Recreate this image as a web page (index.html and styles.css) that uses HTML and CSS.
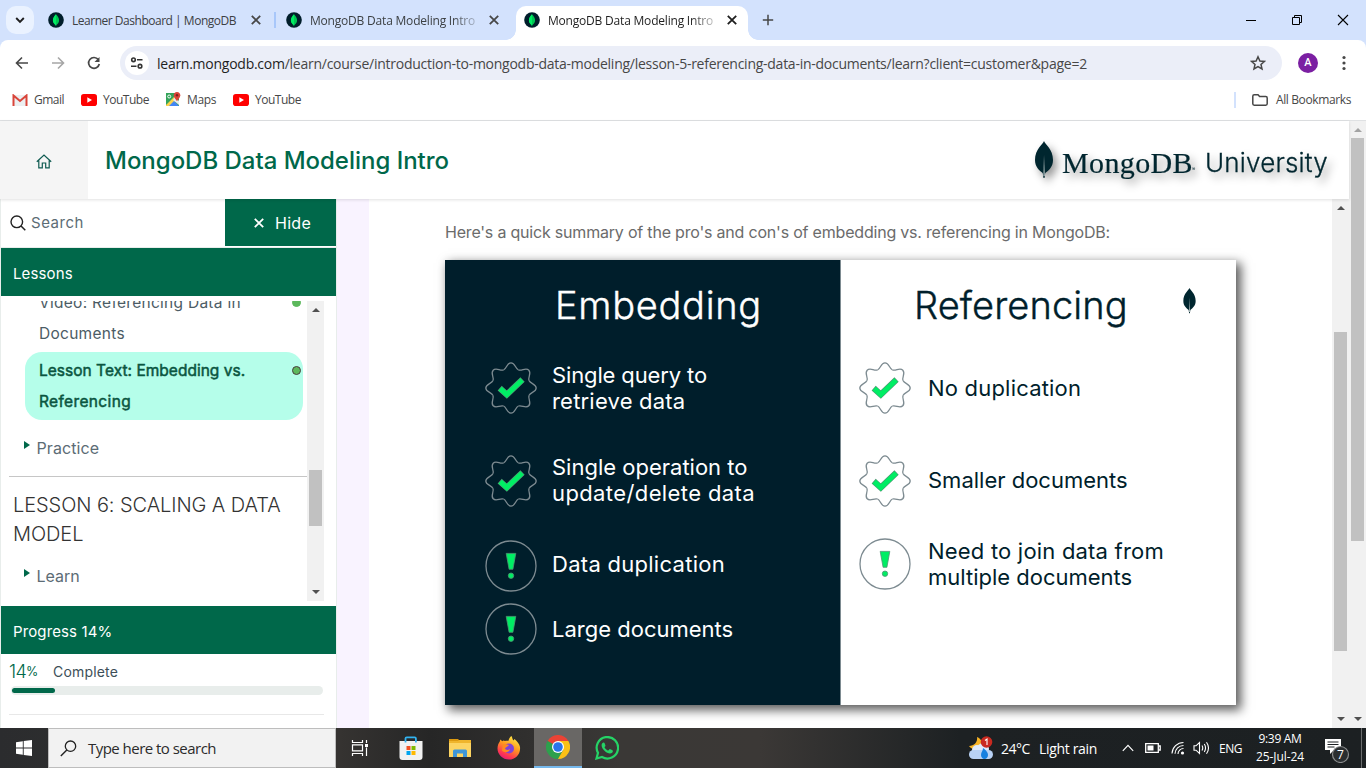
FILE: index.html
```html
<!DOCTYPE html>
<html lang="en">
<head>
<meta charset="utf-8">
<title>MongoDB Data Modeling Intro</title>
<link rel="stylesheet" href="styles.css">
</head>
<body>
<svg class="defs" width="0" height="0">
  <defs>
    <symbol id="leafdot" viewBox="0 0 16 16"><circle cx="8" cy="8" r="7.8" fill="#001e2b"/><path d="M8 2.200C6.200 4.100 4.900 6 4.900 8.300c0 2.100 1.200 3.600 2.600 4.600l.5 1.200.5-1.200c1.400-1 2.600-2.500 2.600-4.600C11.100 6 9.800 4.100 8 2.200z" fill="#00c853"/><path d="M8 2.200v11.900l-.5-1.200C6.100 11.900 4.900 10.400 4.900 8.300 4.900 6 6.200 4.100 8 2.200z" fill="#00ed64"/></symbol>
    <symbol id="x" viewBox="0 0 10 10"><path d="M1.500 1.500l7 7M8.500 1.500l-7 7" stroke="currentColor" stroke-width="1.5" fill="none"/></symbol>
    <symbol id="yt" viewBox="0 0 16 12"><rect width="16" height="12" rx="2.8" fill="#f00"/><path d="M6.300 3.300v5.400L11 6z" fill="#fff"/></symbol>
    <symbol id="leaf" viewBox="0 0 18 38"><path d="M9 0C8.200 3 0 8 0 19c0 7 4.500 10.500 7.700 13L8.500 37h1l.8-5C13.500 29.500 18 26 18 19 18 8 9.800 3 9 0z" fill="#00262f"/><path d="M9 14l-.6 21h1.400z" fill="#b5c3c3"/></symbol>
    <path id="lobe" d="M-7.460-18.020C-4.200-19.400-4.200-25.200 0-25.200S4.200-19.400 7.460-18.020"/>
    <symbol id="check" viewBox="-26 -26 52 52">
      <g fill="none" stroke="#7d8b91" stroke-width="1.300"><use href="#lobe"/><use href="#lobe" transform="rotate(45)"/><use href="#lobe" transform="rotate(90)"/><use href="#lobe" transform="rotate(135)"/><use href="#lobe" transform="rotate(180)"/><use href="#lobe" transform="rotate(225)"/><use href="#lobe" transform="rotate(270)"/><use href="#lobe" transform="rotate(315)"/></g>
      <path d="M-9 2.200L-4.200 6.500 9.300-6.300" fill="none" stroke="#4f9673" stroke-width="6.200" stroke-linecap="square"/>
      <path d="M-9 2.200L-4.200 6.500 9.300-6.300" fill="none" stroke="#00ed64" stroke-width="5" stroke-linecap="square"/>
    </symbol>
    <symbol id="warn" viewBox="-26 -26 52 52">
      <circle r="25" fill="none" stroke="#7d8b91" stroke-width="1.300"/>
      <g fill="#00ed64" stroke="#4f9673" stroke-width=".8"><path d="M-4.800-12.600H4.800L1.900 3.300H-1.900z"/><circle cy="9.700" r="2.700"/></g>
    </symbol>
  </defs>
</svg>

<div class="tabstrip">
  <div class="tab-search"><svg width="10" height="8" viewBox="0 0 10 8"><path d="M1.200 2l3.800 3.800L8.800 2" fill="none" stroke="#1f1f1f" stroke-width="1.900"/></svg></div>
  <div class="tab tab-first"><svg class="fav"><use href="#leafdot"/></svg><span class="tab-title">Learner Dashboard | MongoDB</span><svg class="tab-x"><use href="#x"/></svg></div>
  <div class="tab-sep"></div>
  <div class="tab tab-second"><svg class="fav"><use href="#leafdot"/></svg><span class="tab-title fade">MongoDB Data Modeling Intro</span><svg class="tab-x"><use href="#x"/></svg></div>
  <div class="tab tab-active"><svg class="fav"><use href="#leafdot"/></svg><span class="tab-title fade">MongoDB Data Modeling Intro</span><svg class="tab-x"><use href="#x"/></svg></div>
  <svg class="new-tab" width="12" height="12" viewBox="0 0 12 12"><path d="M6 .8v10.400M.8 6h10.400" stroke="#474747" stroke-width="1.500"/></svg>
  <div class="win-controls">
    <svg width="46" height="40"><path d="M18 20.500h10" stroke="#000"/></svg>
    <svg width="46" height="40"><path d="M18.500 17.500h7v7h-7zM20.500 17.500v-2h7v7h-2" fill="none" stroke="#000"/></svg>
    <svg width="46" height="40"><path d="M18 15l10 10M28 15L18 25" stroke="#000" stroke-width="1.100"/></svg>
  </div>
</div>

<div class="toolbar">
  <div class="nav">
    <svg width="36" height="24" viewBox="0 0 36 24"><path d="M24 12H13M18 6.500L12.500 12l5.500 5.500" fill="none" stroke="#474747" stroke-width="1.600"/></svg>
    <svg width="36" height="24" viewBox="0 0 36 24"><path d="M12 12h11M18 6.500l5.500 5.500-5.500 5.500" fill="none" stroke="#a6a6a6" stroke-width="1.600"/></svg>
    <svg width="36" height="24" viewBox="0 0 36 24"><path d="M22.300 8.600A5.400 5.400 0 1 0 23.300 13" fill="none" stroke="#474747" stroke-width="1.700"/><path d="M23.500 6v5h-5z" fill="#474747"/></svg>
  </div>
  <div class="omnibox">
    <div class="site-info"><svg width="14" height="12" viewBox="0 0 14 12"><g fill="none" stroke="#333" stroke-width="1.600"><circle cx="3.500" cy="2.800" r="1.800"/><path d="M7 2.800h5.500M1 9.200h5.500"/><circle cx="10" cy="9.200" r="1.800"/></g></svg></div>
    <span class="url"><b class="host">learn.mongodb.com</b>/learn/course/introduction-to-mongodb-data-modeling/lesson-5-referencing-data-in-documents/learn?client=customer&amp;page=2</span>
    <svg class="star" width="16" height="16" viewBox="0 0 16 16"><path d="M8 1.800l1.900 4.200 4.500.4-3.400 3 1 4.500L8 11.500l-4 2.400 1-4.500-3.400-3 4.500-.4z" fill="none" stroke="#474747" stroke-width="1.500"/></svg>
  </div>
  <div class="avatar">A</div>
  <svg class="kebab" width="4" height="16" viewBox="0 0 4 16"><g fill="#474747"><circle cx="2" cy="2.500" r="1.600"/><circle cx="2" cy="8" r="1.600"/><circle cx="2" cy="13.500" r="1.600"/></g></svg>
</div>

<div class="bookmarks">
  <div class="bm bm-gmail"><svg width="16" height="12" viewBox="0 0 16 12"><path d="M1 1h14v11H1z" fill="#eceff1"/><path d="M1.500 12V1.500L8 7l6.500-5.500V12" fill="none" stroke="#d9453a" stroke-width="2"/></svg><span>Gmail</span></div>
  <div class="bm bm-yt"><svg width="16" height="12"><use href="#yt"/></svg><span>YouTube</span></div>
  <div class="bm bm-maps"><svg width="16" height="15" viewBox="0 0 16 15"><path d="M1 1h13v13H1z" fill="#34a35a"/><path d="M1 13L12 2h2v3L5 14H1z" fill="#fbd24b"/><path d="M4 14l5-5 5 5z" fill="#4285f4"/><path d="M10 5l4 4v4L8 8z" fill="#e8eaed"/><circle cx="4.200" cy="4.500" r="1.500" fill="none" stroke="#fff"/><path d="M12 0c-2 0-3.300 1.400-3.300 3.200C8.700 5.500 12 9 12 9s3.300-3.500 3.300-5.800C15.300 1.400 14 0 12 0z" fill="#db4437"/><circle cx="12" cy="3.200" r="1.200" fill="#7b231c"/></svg><span>Maps</span></div>
  <div class="bm bm-yt2"><svg width="16" height="12"><use href="#yt"/></svg><span>YouTube</span></div>
  <div class="bm-all"><svg width="16" height="12" viewBox="0 0 16 12"><path d="M.8 2.200Q.8.800 2.200.800h3.800l1.600 1.800h6.200q1.400 0 1.400 1.400v5.800q0 1.400-1.400 1.400H2.200Q.8 11.200.8 9.800z" fill="none" stroke="#474747" stroke-width="1.500"/></svg><span>All Bookmarks</span></div>
</div>

<div class="page">
  <div class="page-main">
    <header class="header">
      <div class="home"><svg width="16" height="15" viewBox="0 0 16 15"><path d="M.8 7.800L8 1l7.200 6.800M2.800 6.500v7.300h3.500V9h3.400v4.800h3.500V6.500" fill="none" stroke="#0e5a50" stroke-width="1.200"/></svg></div>
      <h1 class="title">MongoDB Data Modeling Intro</h1>
      <div class="logo"><svg class="logo-leaf" width="18" height="38"><use href="#leaf"/></svg><span class="logo-mongo">MongoDB</span><span class="logo-reg">®</span><span class="logo-uni">University</span></div>
    </header>
    <div class="columns">
      <aside class="sidebar">
        <div class="search-row">
          <svg width="16" height="16" viewBox="0 0 16 16"><circle cx="6.800" cy="6.800" r="5.800" fill="none" stroke="#222" stroke-width="1.400"/><path d="M11 11l4.300 4.300" stroke="#222" stroke-width="1.500"/></svg>
          <span class="search-text">Search</span>
          <div class="hide"><svg width="12" height="12"><use href="#x"/></svg><span>Hide</span></div>
        </div>
        <div class="bar bar-lessons">Lessons</div>
        <div class="list">
          <div class="items">
            <div class="item item-video"><p>Video: Referencing Data in<br>Documents</p><i class="dot dot-plain"></i></div>
            <div class="item item-current"><p>Lesson Text: Embedding vs.<br><span class="second">Referencing</span></p><i class="dot"></i></div>
            <div class="group group-practice"><i class="tri"></i><span>Practice</span></div>
            <h2 class="lesson">LESSON 6: SCALING A DATA<br>MODEL</h2>
            <div class="group group-learn"><i class="tri"></i><span>Learn</span></div>
          </div>
          <div class="sb sb-list"><i class="up"></i><i class="thumb"></i><i class="down"></i></div>
        </div>
        <div class="bar bar-progress">Progress 14%</div>
        <div class="progress-label"><span class="pct">14</span><span class="pct-sign">%</span><span class="complete">Complete</span></div>
        <div class="track"><div class="fill"></div></div>
        <div class="rule"></div>
      </aside>
      <main class="content">
        <p class="summary">Here's a quick summary of the pro's and con's of embedding vs. referencing in MongoDB:</p>
        <section class="card">
          <div class="panel panel-dark">
            <h3 class="panel-title">Embedding</h3>
            <div class="row"><svg class="badge"><use href="#check"/></svg><p><span class="tight">Single query to</span><br><span class="loose">retrieve data</span></p></div>
            <div class="row row-2"><svg class="badge"><use href="#check"/></svg><p class="up-1">Single operation to<br><span class="wide">update/delete data</span></p></div>
            <div class="row row-3"><svg class="badge"><use href="#warn"/></svg><p class="raised">Data duplication</p></div>
            <div class="row row-4"><svg class="badge"><use href="#warn"/></svg><p>Large documents</p></div>
          </div>
          <div class="panel panel-light">
            <h3 class="panel-title">Referencing</h3>
            <svg class="card-leaf"><use href="#leaf"/></svg>
            <div class="row"><svg class="badge"><use href="#check"/></svg><p class="loose">No duplication</p></div>
            <div class="row row-2"><svg class="badge"><use href="#check"/></svg><p class="up-1">Smaller documents</p></div>
            <div class="row row-need"><svg class="badge"><use href="#warn"/></svg><p><span class="loose">Need to join data from</span><br>multiple documents</p></div>
          </div>
        </section>
      </main>
      <div class="sb sb-inner"><i class="up"></i><i class="thumb"></i><i class="down"></i></div>
    </div>
  </div>
  <div class="sb sb-outer"><i class="up dim"></i><i class="thumb"></i><i class="down"></i></div>
</div>

<footer class="taskbar">
  <div class="start"><svg width="16" height="16" viewBox="0 0 16 16"><path d="M0 2.200L6.800 1.300V7.600H0zM7.700 1.100L16 0v7.600H7.700zM0 8.400h6.800v6.300L0 13.800zM7.700 8.400H16V16l-8.300-1.100z" fill="#fff"/></svg></div>
  <div class="tb-search"><svg width="17" height="17" viewBox="0 0 17 17"><circle cx="10.500" cy="6.200" r="5.200" fill="none" stroke="#222" stroke-width="1.300"/><path d="M6.800 10L.8 16" stroke="#222" stroke-width="1.400"/></svg><span>Type here to search</span></div>
  <div class="tb-icon"><svg width="18" height="16" viewBox="0 0 18 16"><g fill="none" stroke="#fff" stroke-width="1.200"><path d="M1.500 0v2.500h10V0M1.500 4.800h10v6h-10zM1.500 16v-2.500h10V16M15.500 0v3M15.500 7.500V16"/></g><path d="M14 4h3v3h-3z" fill="#fff"/></svg></div>
  <div class="tb-icon tb-store"><svg width="24" height="24" viewBox="0 0 24 24"><path d="M.5 5h23v16q0 3-3 3h-17q-3 0-3-3z" fill="#f1f1f1"/><path d="M6.500 6.500V2.500Q6.500 1.300 7.700 1.300h8q1.200 0 1.200 1.200v4" fill="none" stroke="#32b3f0" stroke-width="1.800"/><path d="M7.500 10h4v4h-4z" fill="#f25022"/><path d="M12.500 10h4v4h-4z" fill="#7fba00"/><path d="M7.500 15h4v4h-4z" fill="#00a4ef"/><path d="M12.500 15h4v4h-4z" fill="#ffb900"/></svg></div>
  <div class="tb-icon"><svg width="22" height="19" viewBox="0 0 22 19"><path d="M0 0h9l2 2H0z" fill="#dd9a10"/><path d="M0 2h22v16H0z" fill="#fcd462"/><path d="M0 2h9l1-1h12v3H0z" fill="#efb52c"/><path d="M4 18v-6q0-1.500 1.500-1.500h11Q18 10.500 18 12v6h-4v-3.500H8V18z" fill="#3e96d8"/></svg></div>
  <div class="tb-icon"><svg width="24" height="24" viewBox="0 0 24 24"><defs><linearGradient id="ff" x1=".8" y1="0" x2=".3" y2="1"><stop offset="0" stop-color="#fff04a"/><stop offset=".45" stop-color="#ff9a1f"/><stop offset=".8" stop-color="#ff3850"/><stop offset="1" stop-color="#e21c78"/></linearGradient></defs><path d="M14.500 0c1 2 .8 3 2 4.500l1-1.500C20 5 22.500 8 23 11c.8 7-4.500 12.500-11 12.500S.5 18.500.5 12.500c0-3 1-5 2.200-6.700l.6-2.300 2 1.700C6.500 4 7 4.500 8 5c2-.5 3 0 3.300 0C12 2.500 13 1 14.500 0z" fill="url(#ff)"/><circle cx="12" cy="12.500" r="5" fill="#8043d8"/><path d="M6 8c2 0 4 .5 6 1-1 2-3 1.500-4 3.500 1 2 3.500 1.500 5 .5-1 4-6 4-8 1.500z" fill="#ff8a20"/></svg></div>
  <div class="tb-icon tb-active"><svg width="24" height="24" viewBox="0 0 24 24"><path d="M12 12L1.600 6A12 12 0 0 1 22.400 6z" fill="#ea4335"/><path d="M12 12l5.200 3L12 24A12 12 0 0 1 1.600 6z" fill="#2da04d"/><path d="M12 6h10.400A12 12 0 0 1 12 24l5.200-9z" fill="#fbc116"/><circle cx="12" cy="12" r="6" fill="#fff"/><circle cx="12" cy="12" r="4.800" fill="#2a75ea"/></svg></div>
  <div class="tb-icon"><svg width="24" height="24" viewBox="0 0 24 24"><path d="M1.500 22.500l1.500-5.600A10.700 10.700 0 1 1 7 21z" fill="none" stroke="#25d366" stroke-width="2.200"/><path d="M8.600 6.500c-.8 0-2 1-2 2.700 0 3.800 5 8.300 8.400 8.300 1.700 0 2.900-1.200 2.900-2.500 0-.6-2.600-1.900-3.100-1.900s-1 1.500-1.600 1.500c-.8 0-3.700-2.500-3.700-3.300 0-.4 1-1.100 1-1.600 0-.4-.9-2.700-1.200-3z" fill="#25d366"/></svg></div>
  <div class="tray">
    <div class="weather"><svg width="27" height="24" viewBox="0 0 27 24"><path d="M9 1c1 5-3 9-8 9 2 3 6 4 9 3s4-4 4-6-2-5-5-6z" fill="#f8b425"/><circle cx="9" cy="14" r="5" fill="#dfe9fa"/><circle cx="15" cy="13" r="6" fill="#dfe9fa"/><rect x="1" y="14" width="24" height="9" rx="4.500" fill="#b9d2f5"/><path d="M15 12c4 3 5 5 5 7s-1.500 4-3.500 4-3.500-2-3.500-4c0-3 2-4 2-7z" fill="#1780e0"/><circle cx="18.500" cy="6" r="5.800" fill="#c92a20"/><path d="M17 4.500l2-1.500v6" fill="none" stroke="#fff" stroke-width="1.100"/></svg></div>
    <span class="temp">24°C</span><span class="rain">Light rain</span>
    <svg class="chev" width="12" height="8" viewBox="0 0 12 8"><path d="M.8 6.800L6 1.400l5.200 5.400" fill="none" stroke="#fff" stroke-width="1.200"/></svg>
    <svg class="batt" width="16" height="10" viewBox="0 0 16 10"><path d="M.7.700h12.600v8.600H.7zM14 3h1.200v4H14" fill="none" stroke="#fff" stroke-width="1.300"/><path d="M2.500 2.500h6v5h-6z" fill="#fff"/></svg>
    <svg class="wifi" width="14" height="14" viewBox="0 0 14 14"><g fill="none" stroke="#fff" stroke-width="1.100"><path d="M1 12.500A11.500 11.500 0 0 1 12.500 1.500M4 12.800A8.500 8.500 0 0 1 12.500 4.500M7 13A5.500 5.500 0 0 1 12.500 7.500"/></g><circle cx="11.500" cy="12" r="1.600" fill="#fff"/></svg>
    <svg class="vol" width="17" height="14" viewBox="0 0 17 14"><g fill="none" stroke="#fff" stroke-width="1.100"><path d="M1 4.800h2L6.500 1.500v11L3 9.200H1zM9 4.500q1.500 2.500 0 5M11.300 3q2.500 4 0 8M13.500 1.300q4 5.700 0 11.400"/></g></svg>
    <span class="lang">ENG</span>
    <div class="clock"><span class="time">9:39 AM</span><br><span>25-Jul-24</span></div>
    <svg class="notif" width="26" height="26" viewBox="0 0 26 26"><path d="M0 2h16v11H9l-4 4v-4H0z" fill="#fff"/><path d="M2.500 5h11M2.500 7.500h11M2.500 10h7" stroke="#1c2022"/><circle cx="15.500" cy="17.500" r="8" fill="#2a2e30" stroke="#8b8d8e" stroke-width="1.200"/><text x="15.500" y="21.800" text-anchor="middle" class="notif-n">7</text></svg>
    <i class="peek"></i>
  </div>
</footer>
</body>
</html>
```

FILE: styles.css
```css
* { box-sizing: border-box; }
body { margin: 0; width: 1366px; height: 768px; overflow: hidden; display: flex; flex-direction: column; background: #d3e2fd; font-family: "Open Sans", "Noto Sans", sans-serif; font-size: 12px; color: #474747; position: relative; }
svg { display: block; flex: none; }
p, h1, h2, h3 { margin: 0; font-weight: 400; white-space: nowrap; }
span { white-space: nowrap; }
.defs { position: absolute; }

/* tab strip */
.tabstrip { height: 40px; flex: none; display: flex; align-items: center; padding-left: 6px; }
.tab-search { width: 28px; height: 28px; border-radius: 10px; background: #eaf2ff; display: flex; align-items: center; justify-content: center; margin-right: 14px; }
.tab { display: flex; align-items: center; height: 34px; }
.fav { width: 16px; height: 16px; margin-right: 8px; }
.tab-title { width: 166px; padding-top: 1px; font-size: 12px; line-height: 18px; letter-spacing: -.2px; color: #3c4043; }
.tab-first .tab-title { letter-spacing: -.48px; }
.tab-x { width: 12px; height: 12px; margin-left: 12px; color: #474747; }
.tab-sep { width: 2px; height: 16px; background: #a8c7fa; margin: 0 10px 0 12px; }
.tab-second { margin-right: 16px; }
.fade { -webkit-mask-image: linear-gradient(90deg, #000 86%, rgba(0,0,0,.25)); mask-image: linear-gradient(90deg, #000 86%, rgba(0,0,0,.25)); }
.tab-active { position: relative; align-self: flex-end; width: 232px; background: #fff; border-radius: 10px 10px 0 0; padding: 0 0 6px 8px; }
.tab-active::before, .tab-active::after { content: ""; position: absolute; bottom: 0; width: 10px; height: 10px; }
.tab-active::before { left: -10px; background: radial-gradient(circle at 0 0, transparent 9.500px, #fff 10px); }
.tab-active::after { right: -10px; background: radial-gradient(circle at 100% 0, transparent 9.500px, #fff 10px); }
.tab-active .tab-title, .tab-active .tab-x { color: #1f1f1f; }
.new-tab { margin-left: 14px; }
.win-controls { display: flex; margin-left: auto; }

/* toolbar */
.toolbar { height: 46px; flex: none; display: flex; align-items: center; padding-left: 4px; background: #fff; border-radius: 8px 8px 0 0; }
.nav { display: flex; width: 116px; }
.omnibox { width: 1162px; height: 34px; border-radius: 17px; background: #ebeef8; display: flex; align-items: center; padding-left: 5px; }
.site-info { width: 24px; height: 24px; border-radius: 50%; background: #fff; display: flex; align-items: center; justify-content: center; margin-right: 8px; }
.url { width: 1093px; font-size: 14px; letter-spacing: -.257px; color: #474747; }
.host { font-weight: 400; color: #1f1f1f; }
.avatar { width: 20px; height: 20px; margin: 0 24px 0 16px; border-radius: 50%; background: #7b1fa2; color: #fff; font: 500 11px/20px Roboto, sans-serif; text-align: center; }

/* bookmarks */
.bookmarks { height: 35px; flex: none; display: flex; align-items: center; padding: 0 15px 7px 12px; background: #fff; border-bottom: 1px solid #dfe1e3; letter-spacing: -.48px; }
.bm { display: flex; align-items: center; gap: 6px; }
.bm-gmail { width: 69px; }
.bm-yt { width: 84px; }
.bm-maps { width: 68px; gap: 6px; letter-spacing: -.38px; }
.bm-all { display: flex; align-items: center; gap: 8px; margin-left: auto; height: 16px; padding-left: 16px; border-left: 2px solid #d3e2fd; letter-spacing: -.38px; }

/* page */
.page { flex: 1; min-height: 0; display: flex; background: #fff; font-family: Inter, "Liberation Sans", sans-serif; }
.page-main { width: 1349px; display: flex; flex-direction: column; }
.header { height: 78px; flex: none; display: flex; align-items: center; box-shadow: 0 1px 3px rgba(0,0,0,.12); z-index: 1; background: #fff; }
.home { width: 88px; height: 78px; background: #f5f5f5; display: flex; align-items: center; justify-content: center; padding: 2px 0 0; }
.title { margin-left: 17px; padding-top: 2px; font-size: 24px; line-height: 32px; font-weight: 500; letter-spacing: -.02px; color: #00684a; }
.logo { margin-left: auto; width: 314px; display: flex; align-items: center; color: #00262f; filter: drop-shadow(4px 5px 4px rgba(0,0,0,.4)); }
.logo-leaf { margin-top: -1px; }
.logo-mongo { margin-left: 9px; padding-top: 6px; font: 30px/36px "Liberation Serif", serif; letter-spacing: .38px; -webkit-text-stroke: .2px #00262f; width: 130px; }
.logo-reg { font-size: 5px; width: 13px; padding-top: 17px; }
.logo-uni { font-size: 26px; line-height: 32px; font-weight: 300; letter-spacing: .19px; padding-top: 6px; -webkit-text-stroke: .3px #00262f; }
.columns { flex: 1; min-height: 0; display: flex; }

/* sidebar */
.sidebar { width: 337px; flex: none; border: solid #e8edeb; border-width: 0 1px; font-size: 16px; }
.search-row { height: 49px; display: flex; align-items: center; padding-left: 9px; border-bottom: 1px solid #e8edeb; }
.search-text { margin: -1px 0 0 5px; width: 194px; color: #5c6c75; font-size: 15px; letter-spacing: .54px; }
.hide { width: 111px; height: 47px; align-self: flex-start; background: #00684a; color: #fff; display: flex; align-items: center; gap: 10px; padding: 1px 0 0 28px; letter-spacing: .28px; }
.bar { height: 48px; background: #00684a; color: #fff; padding-left: 12px; font-size: 15px; line-height: 51px; letter-spacing: .12px; }
.list { margin: 5px 0; height: 300px; display: flex; }
.items { width: 306px; height: 300px; overflow: hidden; color: #5c6c75; }
.item { line-height: 31px; font-size: 15.500px; display: flex; justify-content: space-between; }
.item-video { margin: -14px 6px 3px 38px; color: #4c5c65; letter-spacing: .28px; }
.item-current { margin: 0 4px 0 24px; padding: 3px 2px 3px 14px; height: 68px; border-radius: 17px; background: #b5feea; color: #0a5540; -webkit-text-stroke: .5px #0a5540; letter-spacing: .02px; }
.second { letter-spacing: .35px; }
.dot { width: 9px; height: 9px; margin-top: 11px; border-radius: 50%; background: #5cb85c; border: 1px solid #4b3c40; }
.dot-plain { border-color: #5cb85c; }
.group { display: flex; padding-left: 23px; height: 31px; line-height: 31px; letter-spacing: .1px; }
.group-practice { margin-top: 13px; height: 43px; }
.group-learn { margin-top: 12px; letter-spacing: 0; }
.tri { border: 4px solid transparent; border-left: 6px solid #00684a; border-right: 0; height: 8px; margin: 8px 6.500px 0 0; }
.lesson { margin-left: 8px; padding: 14px 0 0 4px; border-top: 1px solid #c6c6c6; font-size: 20px; line-height: 29px; color: #333; font-weight: 300; letter-spacing: -.08px; }
.progress-label { display: flex; height: 32px; padding: 0 0 0 8px; line-height: 36px; color: #3d4f58; }
.pct { font-size: 18px; color: #00684a; font-weight: 300; width: 17px; letter-spacing: -.7px; }
.pct-sign { font-size: 12.500px; color: #00684a; width: 27px; }
.complete { font-size: 14px; letter-spacing: .17px; }
.track { width: 312px; height: 9px; margin-left: 10px; padding: 2px 1px; border-radius: 5px; background: #e8edeb; }
.fill { width: 43px; height: 5px; border-radius: 3px; background: #00684a; }
.rule { margin: 19px 12px 0 8px; border-top: 1px solid #e8e8e8; }

/* lesson content */
.content { flex: 1; min-width: 0; border-left: 32px solid #f9f3ff; padding-left: 76px; overflow: hidden; }
.summary { height: 61px; font-size: 16px; line-height: 67px; letter-spacing: -.2px; color: #6b6b6b; }
.card { width: 791px; height: 445px; display: flex; box-shadow: 4px 4px 10px 1px rgba(0,0,0,.65); font-weight: 300; }
.panel { position: relative; padding-top: 23px; }
.panel-dark { width: 395px; background: #001e2b; color: #fff; padding-left: 40px; }
.panel-light { width: 396px; background: #fff; color: #001e2b; padding-left: 18px; border-left: 1px solid #7d8b91; }
.panel-title { height: 79px; font-size: 38px; line-height: 45px; font-weight: 300; }
.panel-dark .panel-title { padding-left: 70px; letter-spacing: .7px; -webkit-text-stroke: .4px #fff; }
.panel-light .panel-title { padding-left: 55px; letter-spacing: .1px; -webkit-text-stroke: .4px #001e2b; }
.row { display: flex; align-items: center; height: 52px; font-size: 22px; line-height: 26px; }
.row-2 { margin-top: 41px; }
.row-3 { margin-top: 33px; }
.row-4 { margin-top: 11px; }
.row-need { margin-top: 31px; }
.raised { padding-bottom: 4px; letter-spacing: .28px; }
.up-1 { padding-bottom: 2px; }
.loose { letter-spacing: .2px; }
.wide { letter-spacing: .39px; }
.tight { letter-spacing: -.13px; }
.badge { width: 52px; height: 52px; margin-right: 15px; }
.panel-light .badge { margin-right: 17px; }
.card-leaf { position: absolute; left: 342px; top: 28px; width: 13px; height: 26px; }

/* scrollbars */
.sb { width: 17px; flex: none; background: #f1f1f1; display: flex; flex-direction: column; align-items: center; }
.sb .thumb { width: 13px; background: #c1c1c1; }
.up, .down { border: 4px solid transparent; width: 8px; height: 4px; }
.up { border-top: 0; border-bottom-color: #505050; margin-top: 7px; }
.down { border-bottom: 0; border-top-color: #505050; margin: auto 0 7px; }
.up.dim { border-bottom-color: #a3a3a3; }
.sb-list .thumb { height: 56px; margin-top: 158px; }
.sb-inner .thumb { height: 319px; margin-top: 122px; }
.sb-outer .thumb { height: 403px; margin-top: 6px; }

/* taskbar */
.taskbar { height: 40px; flex: none; display: flex; color: #fff; background: linear-gradient(90deg, #2b2c2e 0, #353331 340px, #262626 430px, #3a3836 620px, #3b3836 760px, #1d2123 960px, #1c2022); }
.start { width: 48px; display: flex; align-items: center; justify-content: center; }
.tb-search { width: 288px; border: 1px solid #bdbdbd; background: #f2f2f2; color: #2b2b2b; display: flex; align-items: center; padding-left: 11px; gap: 11px; font-size: 15px; letter-spacing: -.53px; }
.tb-icon { width: 48px; display: flex; align-items: center; justify-content: center; margin-right: 1px; }
.tb-store { margin-left: 2px; }
.tb-active { background: #696765; border-bottom: 2px solid #76b9ed; }
.tray { margin-left: auto; display: flex; align-items: center; width: 398px; font-size: 14px; }
.tray > * { flex: none; }
.temp { margin-left: 6px; width: 38px; letter-spacing: -.46px; }
.rain { width: 58px; letter-spacing: -.33px; }
.chev { margin-left: 25px; }
.batt { margin-left: 11px; }
.wifi { margin-left: 10px; }
.vol { margin-left: 8px; }
.lang { font-size: 12px; margin-left: 9px; width: 37px; letter-spacing: -.48px; }
.clock { font-size: 12px; line-height: 18px; text-align: center; width: 48px; letter-spacing: -.09px; }
.time { letter-spacing: -.32px; }
.notif { margin: 4px 10px 0 21px; }
.notif-n { font: 12px "Open Sans", sans-serif; fill: #fff; }
.peek { width: 1px; height: 40px; background: #6a6c6d; }
```
